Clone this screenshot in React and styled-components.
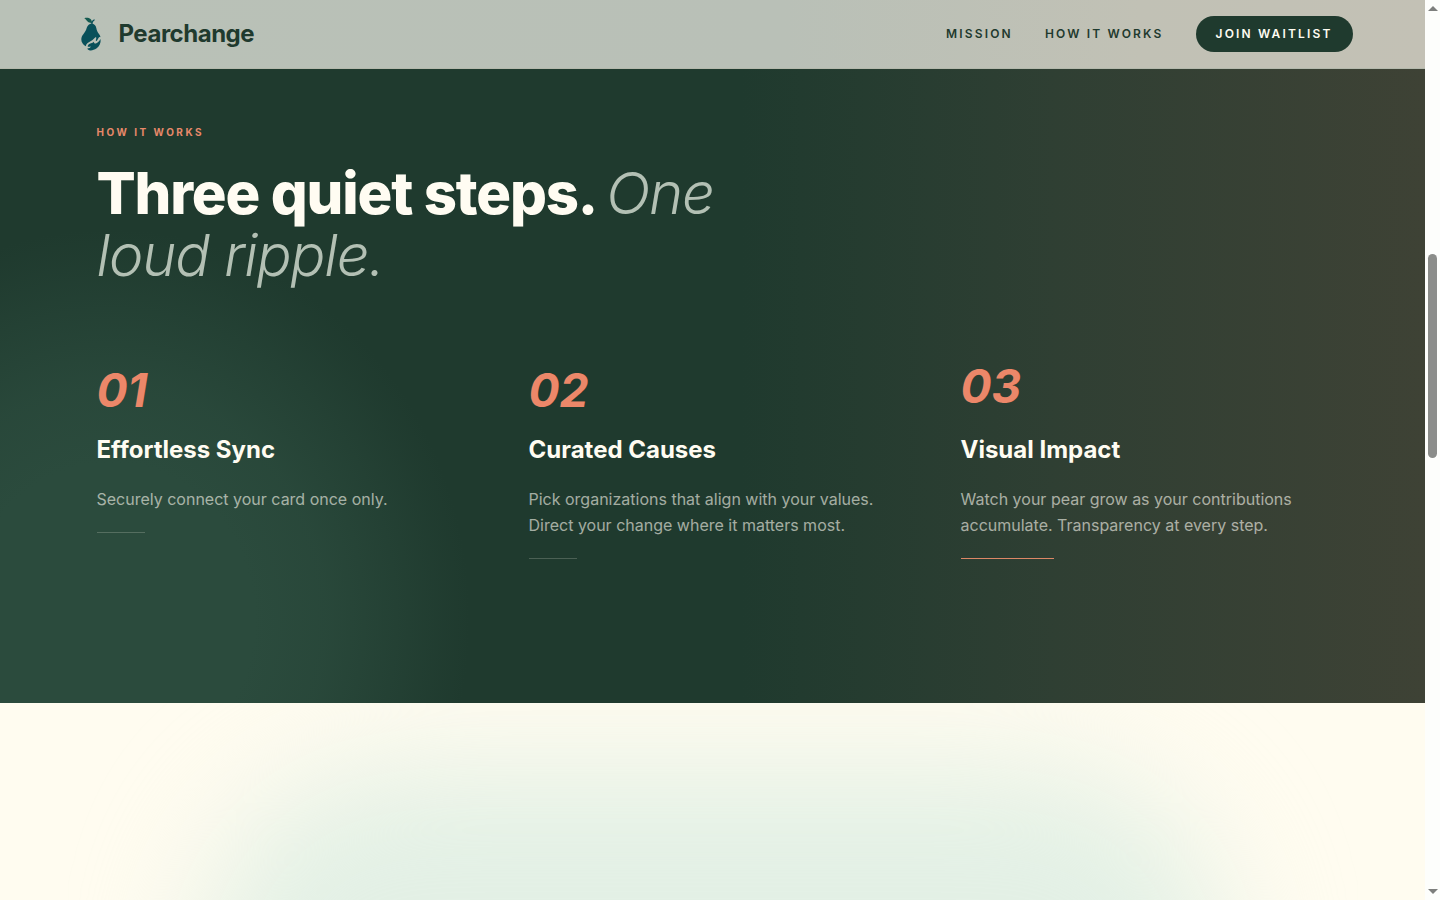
import styled, { createGlobalStyle } from 'styled-components';

const steps = [
	{ number: '01', title: 'Effortless Sync', text: 'Securely connect your card once only.' },
	{
		number: '02',
		title: 'Curated Causes',
		text: 'Pick organizations that align with your values. Direct your change where it matters most.',
	},
	{
		number: '03',
		title: 'Visual Impact',
		text: 'Watch your pear grow as your contributions accumulate. Transparency at every step.',
		active: true,
	},
];

const PearLogo = () => (
	<svg width="24" height="36" viewBox="0 0 24 36" aria-hidden="true">
		<path
			fill="#145a50"
			d="M13 7C11.600 7.200 9.800 6.800 8.600 5.600 7.600 4.600 7 3.200 5.300 2.200c2.200-.7 4.800-.4 6.200.9 1.100 1 1.500 2.500 1.500 3.900z"
		/>
		<path
			fill="none"
			stroke="#08505a"
			strokeWidth="1.300"
			strokeLinecap="round"
			d="M12.800 8.500c0-2.200.7-3.800 2.300-4.500"
		/>
		<path
			fill="#08505a"
			d="M12.600 7.800c2.600 0 4.300 1.700 4.700 4.200.4 2.500 1.300 4.200 2.700 6 .8 1.100 1.300 2.100 1.500 3.200-.7-.6-1.600-.2-2 .7l-1.300 2.400c-.5.8-1.100 1-1.300.5-.2-.6.100-1.500.4-2.600.2-.9-.7-1.200-1.400-.5-1.500 1.500-2.500 2.600-4.400 3.600-2.400 1.200-4.300 2.400-4.700 4.900C4 28.800 2.300 26.400 2.300 23.300c0-4.100 3.800-6.300 5-10.100.8-2.700 2.100-5.400 5.300-5.400z"
		/>
		<path
			fill="#08505a"
			d="M21.600 23c.4 4.200-1.200 7.600-4.200 9.600-2 1.300-4.200 2-6.200 1.800-1.500-.1-2.600-.9-2.900-2 1.600-.1 3.100-.8 3.700-2-1.300.3-2.700.4-3.400 0 .4-1.700 1.700-2.800 3.400-3.200 1.200-.3 2.100-.8 2.800-1.500.1 1.300.9 2 2.100 1.700 2-.5 3.300-2.300 4.700-4.400z"
		/>
	</svg>
);

const App = () => {
	return (
		<>
			<GlobalStyle />
			<Window>
				<Page>
					<Header>
						<HeaderInner>
							<Brand href="#top">
								<PearLogo />
								<span>Pearchange</span>
							</Brand>
							<Nav>
								<NavLink href="#mission">Mission</NavLink>
								<NavLink href="#how">How it works</NavLink>
								<JoinButton type="button">Join waitlist</JoinButton>
							</Nav>
						</HeaderInner>
					</Header>

					<HowItWorks id="how">
						<Container>
							<Eyebrow>How it works</Eyebrow>
							<Heading>
								Three quiet steps. <em>One</em> <em>loud ripple.</em>
							</Heading>
							<StepList>
								{steps.map(step => (
									<Step key={step.number}>
										<StepNumber $active={step.active}>{step.number}</StepNumber>
										<StepTitle>{step.title}</StepTitle>
										<StepText>{step.text}</StepText>
										<StepRule $active={step.active} />
									</Step>
								))}
							</StepList>
						</Container>
					</HowItWorks>

					<NextSection>
						<Glow />
					</NextSection>
				</Page>

				<ScrollTrack aria-hidden="true">
					<Arrow />
					<Thumb />
					<Arrow $down />
				</ScrollTrack>
			</Window>
		</>
	);
};

export default App;

const GlobalStyle = createGlobalStyle`
	* {
		box-sizing: border-box;
	}

	body {
		margin: 0;
		background: #fffcf2;
		font-family: 'Inter', sans-serif;
	}

	h2,
	h3,
	p,
	ol {
		margin: 0;
		padding: 0;
	}
`;

const Window = styled.div`
	display: flex;
	min-height: 100vh;
`;

const Page = styled.div`
	flex: 1;
	min-width: 0;
	display: flex;
	flex-direction: column;
`;

const Header = styled.header`
	padding: 16px 0;
	border-bottom: 1px solid #b4b9ac;
	background: linear-gradient(90deg, #b9c1b7 0%, #b9c0b7 55%, #c1c1b5 80%, #c3c1b5 100%);
`;

const HeaderInner = styled.div`
	max-width: 1280px;
	margin: 0 auto;
	display: flex;
	align-items: center;
	justify-content: space-between;
`;

const Brand = styled.a`
	display: flex;
	align-items: center;
	gap: 16px;
	padding-left: 6px;
	color: #1f3a2e;
	font-size: 24px;
	line-height: 32px;
	font-weight: 700;
	letter-spacing: -0.02em;
	text-decoration: none;
`;

const Nav = styled.nav`
	display: flex;
	align-items: center;
	gap: 32px;
`;

const NavLink = styled.a`
	color: #1f3a2e;
	font-size: 12px;
	line-height: 16px;
	font-weight: 600;
	letter-spacing: 0.18em;
	text-transform: uppercase;
	text-decoration: none;
`;

const JoinButton = styled.button`
	padding: 10px 20px;
	border: none;
	border-radius: 999px;
	background: #1f3a2e;
	color: #fffcf2;
	font-family: inherit;
	font-size: 12px;
	line-height: 16px;
	font-weight: 600;
	letter-spacing: 0.18em;
	text-transform: uppercase;
	cursor: pointer;
`;

const HowItWorks = styled.section`
	padding: 56px 0 144px;
	background:
		radial-gradient(
			ellipse 360px 390px at 110px 550px,
			#2b4b3d 0%,
			#2b4b3d 40%,
			#2b4b3dcc 60%,
			#2b4b3d66 80%,
			#2b4b3d1f 93%,
			#2b4b3d00 100%
		),
		linear-gradient(90deg, #1f3a2e 52%, #2f3f33 74%, #3e4235 100%);
`;

const Container = styled.div`
	max-width: 1280px;
	margin: 0 auto;
	padding: 0 24px;
`;

const Eyebrow = styled.p`
	color: #e8896a;
	font-size: 10px;
	line-height: 14px;
	font-weight: 700;
	letter-spacing: 0.25em;
	text-transform: uppercase;
`;

const Heading = styled.h2`
	max-width: 672px;
	margin-top: 23px;
	color: #fffcf2;
	font-size: 58px;
	line-height: 62px;
	font-weight: 800;
	letter-spacing: -0.02em;

	em {
		color: #b3c0b4;
		font-weight: 300;
	}
`;

const StepList = styled.ol`
	display: grid;
	grid-template-columns: repeat(3, 1fr);
	gap: 64px;
	margin-top: 80px;
	list-style: none;
`;

const Step = styled.li`
	display: flex;
	flex-direction: column;
	align-items: flex-start;
`;

// the active step's number is lifted a little
const StepNumber = styled.span`
	color: #ec8769;
	font-size: 46px;
	line-height: 48px;
	font-style: italic;
	font-weight: 700;
	transform: ${({ $active }) => ($active ? 'translateY(-4px)' : 'none')};
`;

const StepTitle = styled.h3`
	margin-top: 20px;
	color: #fffcf2;
	font-size: 24px;
	line-height: 32px;
	font-weight: 700;
`;

const StepText = styled.p`
	margin-top: 20px;
	color: #fffcf299;
	font-size: 16px;
	line-height: 26px;
`;

const StepRule = styled.div`
	width: ${({ $active }) => ($active ? '93px' : '48px')};
	height: 1px;
	margin-top: 20px;
	background: ${({ $active }) => ($active ? '#dc8766' : '#fffcf233')};
`;

const NextSection = styled.section`
	position: relative;
	flex: 1;
	overflow: hidden;
	background: #fffcf0;
`;

const Glow = styled.div`
	position: absolute;
	top: 64px;
	left: 14%;
	right: 14%;
	height: 600px;
	border-radius: 200px;
	background: #e3f0e5;
	filter: blur(60px);
`;

const ScrollTrack = styled.div`
	width: 15px;
	display: flex;
	flex-direction: column;
	align-items: center;
	padding: 6px 0;
	background: #fdfefc;
`;

const Arrow = styled.span`
	border: 5px solid transparent;
	border-top-width: ${({ $down }) => ($down ? '5px' : '0')};
	border-bottom-width: ${({ $down }) => ($down ? '0' : '5px')};
	border-top-color: #7d7f7d;
	border-bottom-color: #7d7f7d;
	margin-top: ${({ $down }) => ($down ? 'auto' : '0')};
`;

const Thumb = styled.span`
	width: 9px;
	height: 204px;
	margin-top: 243px;
	border-radius: 5px;
	background: #8b8d8a;
`;
